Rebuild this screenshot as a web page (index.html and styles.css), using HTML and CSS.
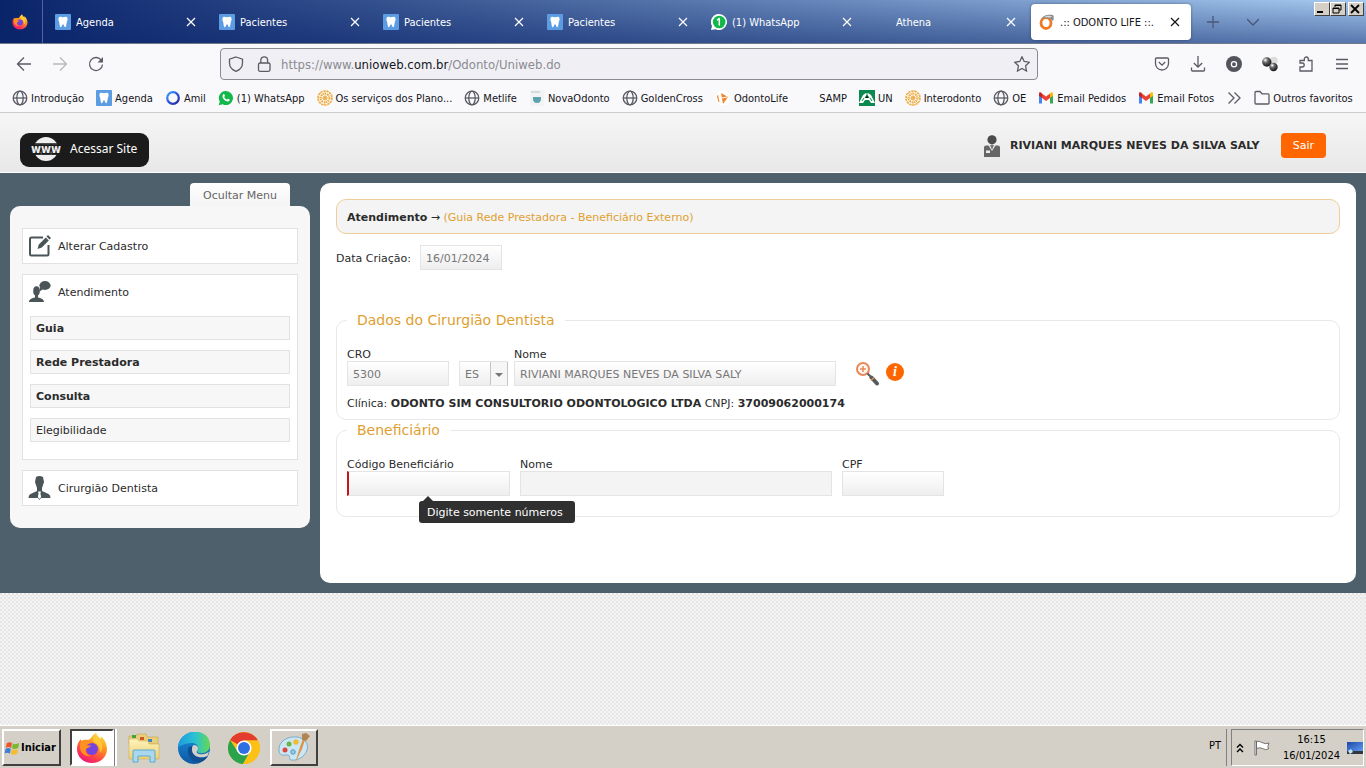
FILE: index.html
```html
<!DOCTYPE html>
<html lang="pt-BR">
<head>
<meta charset="utf-8">
<title>.:: ODONTO LIFE ::.</title>
<link rel="stylesheet" href="styles.css">
</head>
<body>
<svg class="sprite" aria-hidden="true">
  <defs>
    <linearGradient id="ffg" x1="0.8" y1="0" x2="0.2" y2="1"><stop offset="0" stop-color="#ffe141"/><stop offset=".4" stop-color="#ff8a1e"/><stop offset=".75" stop-color="#ff3750"/><stop offset="1" stop-color="#e01587"/></linearGradient>
    <linearGradient id="edg" x1="0" y1="0" x2="1" y2="0"><stop offset="0" stop-color="#1c9be0"/><stop offset=".55" stop-color="#2bc2d0"/><stop offset="1" stop-color="#66d94e"/></linearGradient>
    <linearGradient id="edb" x1="0" y1="0" x2="0" y2="1"><stop offset="0" stop-color="#1b8fdc"/><stop offset="1" stop-color="#0c59a4"/></linearGradient>
    <linearGradient id="fold" x1="0" y1="0" x2="0" y2="1"><stop offset="0" stop-color="#fff3bd"/><stop offset="1" stop-color="#edd06f"/></linearGradient>
    <radialGradient id="ball" cx=".35" cy=".3" r=".8"><stop offset="0" stop-color="#fff"/><stop offset=".35" stop-color="#666"/><stop offset="1" stop-color="#050505"/></radialGradient>
    <linearGradient id="scr" x1="0" y1="0" x2="1" y2="1"><stop offset="0" stop-color="#1c48a8"/><stop offset="1" stop-color="#5f9cf0"/></linearGradient>
    <linearGradient id="aml" x1="0" y1="0" x2="1" y2="1"><stop offset="0" stop-color="#39a9ff"/><stop offset=".5" stop-color="#2c54e0"/><stop offset="1" stop-color="#2a2494"/></linearGradient>
  </defs>
  <symbol id="tooth" viewBox="0 0 16 16"><rect width="16" height="16" rx="1" fill="#5b9ce2"/><path fill="#fff" d="M4 3.200c1.400-.8 2.600 0 4 0s2.600-.8 4 0c1 1 .7 3-.1 4.600-.5 1.600-.4 5.300-1.600 5.500-1.200.2-1.200-3-2.300-3s-1.100 3.200-2.300 3c-1.200-.2-1.100-3.900-1.600-5.500C3.300 6.200 3 4.200 4 3.200z"/></symbol>
  <symbol id="x" viewBox="0 0 10 10"><path d="M1 1l8 8M9 1L1 9" stroke="currentColor" stroke-width="1.200" fill="none"/></symbol>
  <symbol id="firefox" viewBox="0 0 32 32"><path fill="url(#ffg)" d="M20 1c1 3 3 4 5 6 0-1 0-2-.5-3 4 3 6.500 8 6.500 13 0 8-6.500 14-15 14S1 25 1 17c0-4 1-7 4-10 0 1 0 2 .5 2.500C7 8 9 7.500 12 8c3 0 3-4 8-7z"/><circle cx="16" cy="17" r="6" fill="#7543e0"/><path fill="#ff9220" d="M5 9c4-2 7-1 9 2-1 1-3 1-4 2 2 1 4 0 6 1-2 0-4 2-6 3-1 3 1 6 5 7-6 1-11-3-11-9 0-2 0-4 1-6z"/><path fill="#ffd43b" d="M20 1c1 4 5 6 6 11 1 4 0 7-2 9 0-5-1-8-5-10-3-2-3-6 1-10z" opacity=".75"/></symbol>
  <symbol id="globe" viewBox="0 0 16 16"><g fill="none" stroke="#5b5b66" stroke-width="1.300"><circle cx="8" cy="8" r="6.800"/><ellipse cx="8" cy="8" rx="3.200" ry="6.800"/><path d="M1.200 8h13.600"/></g></symbol>
  <symbol id="whats" viewBox="0 0 16 16"><path fill="#12b84a" d="M8 1a7 7 0 1 1-3.300 13.200L.7 15.300l1.100-3.800A7 7 0 0 1 8 1z"/><path fill="#fff" d="M5.300 4.200c.8-.5 1.200.2 1.600 1.500.1.500-.5.800-.7 1.200.6 1.300 1.500 2.100 2.800 2.700.5-.2.800-1 1.300-.8 1.300.7 1.700.8 1.400 1.600-.8 1.500-2.600 1.300-4.200.3-2-1.200-4.300-4-2.200-6.500z"/></symbol>
  <symbol id="whatsn" viewBox="0 0 16 16"><path fill="#fff" d="M8 0a8 8 0 1 1-3.500 15.200L0 16l1-4A8 8 0 0 1 8 0z"/><circle cx="8.200" cy="8" r="6.300" fill="#12b84a"/><path fill="none" stroke="#fff" stroke-width="1.500" d="M6 6l2.300-1.300V11.500"/></symbol>
  <symbol id="wheel" viewBox="0 0 16 16"><g fill="none" stroke="#f0b04a"><circle cx="8" cy="8" r="7" stroke-width="1.700" stroke-dasharray="2.400 .7"/><circle cx="8" cy="8" r="4.400" stroke-width="1.600" stroke-dasharray="1.500 .7"/><circle cx="8" cy="8" r="1.500"/><path stroke-width=".8" d="M8 1v14M1 8h14M3 3l10 10M13 3L3 13"/></g></symbol>
  <symbol id="gmail" viewBox="0 0 16 16"><path fill="#4285f4" d="M1 4v9.500h3V7z"/><path fill="#34a853" d="M15 4v9.500h-3V7z"/><path fill="#fbbc04" d="M12 3.500V8l3-2.200V3.500c0-1.500-2-1.800-3 0z"/><path fill="#c5221f" d="M4 3.500V8L1 5.800V3.500c0-1.500 2-1.800 3 0z"/><path fill="#ea4335" d="M4 3.500l4 3 4-3V8l-4 3-4-3z"/></symbol>
</svg>

<header class="browser">
  <div class="tabs">
    <div class="pinned"><svg class="i16"><use href="#firefox"/></svg></div>
    <div class="tab"><svg class="i16"><use href="#tooth"/></svg><span>Agenda</span><button aria-label="Fechar aba"><svg><use href="#x"/></svg></button></div>
    <div class="tab"><svg class="i16"><use href="#tooth"/></svg><span>Pacientes</span><button aria-label="Fechar aba"><svg><use href="#x"/></svg></button></div>
    <div class="tab"><svg class="i16"><use href="#tooth"/></svg><span>Pacientes</span><button aria-label="Fechar aba"><svg><use href="#x"/></svg></button></div>
    <div class="tab"><svg class="i16"><use href="#tooth"/></svg><span>Pacientes</span><button aria-label="Fechar aba"><svg><use href="#x"/></svg></button></div>
    <div class="tab"><svg class="i16"><use href="#whatsn"/></svg><span>(1) WhatsApp</span><button aria-label="Fechar aba"><svg><use href="#x"/></svg></button></div>
    <div class="tab"><svg class="i16"></svg><span>Athena</span><button aria-label="Fechar aba"><svg><use href="#x"/></svg></button></div>
    <div class="tab active"><svg class="i16" viewBox="0 0 16 16"><ellipse cx="7" cy="9" rx="5" ry="5.500" fill="none" stroke="#ee7a25" stroke-width="2.800"/><path d="M3 5C4 1 9 0 14 1c1 2 1 4 0 6-3-3-7-4-11-2z" fill="#8d8d8d"/><path d="M5 3.500c2-2 5-2 8-1-2 2-5 0-8 1z" fill="#ddd"/></svg><span>.:: ODONTO LIFE ::.</span><button aria-label="Fechar aba"><svg><use href="#x"/></svg></button></div>
    <div class="tabtools">
      <button aria-label="Nova aba"><svg viewBox="0 0 12 12"><path d="M6 0v12M0 6h12"/></svg></button>
      <button aria-label="Listar abas"><svg viewBox="0 0 12 12"><path d="M0 3l6 6 6-6"/></svg></button>
    </div>
    <div class="winbtns">
      <button aria-label="Minimizar"><svg viewBox="0 0 12 10"><path d="M2 8h6" stroke-width="2"/></svg></button>
      <button aria-label="Restaurar"><svg viewBox="0 0 12 10"><path d="M4 3V1h6v5H8M4 1.500h6M2 4h6v5H2zM2 4.500h6"/></svg></button>
      <button class="close" aria-label="Fechar"><svg viewBox="0 0 12 10"><path d="M2 1l8 8M10 1L2 9" stroke-width="1.800"/></svg></button>
    </div>
  </div>

  <div class="navbar">
    <div class="navleft">
      <button aria-label="Voltar"><svg viewBox="0 0 16 16"><path d="M15 8H1.500M8 1.500L1.500 8 8 14.500"/></svg></button>
      <button class="dim" aria-label="Avançar"><svg viewBox="0 0 16 16"><path d="M1 8h13.500M8 1.500L14.500 8 8 14.500"/></svg></button>
      <button aria-label="Recarregar"><svg viewBox="0 0 16 16"><path d="M13.500 4.500A6.500 6.500 0 1 0 14.500 8.500"/><path d="M15 1v5.500H9.500z" fill="#5b5b66" stroke="none"/></svg></button>
    </div>
    <div class="urlbar">
      <svg class="i16" viewBox="0 0 16 16"><path d="M8 1l6.500 2.200V7c0 4-3 7-6.500 8.300C4.500 14 1.500 11 1.500 7V3.200z"/></svg>
      <svg class="i16" viewBox="0 0 16 16"><rect x="2.500" y="7" width="11.500" height="8.300" rx="1.500"/><path d="M4.800 7V4.200a3.400 3.400 0 0 1 6.800 0V7"/></svg>
      <p class="url">https://www.<b>unioweb.com.br</b>/Odonto/Uniweb.do</p>
      <svg class="i16" viewBox="0 0 16 16"><path d="M8 .8l2.200 4.700 5.100.7-3.700 3.600.9 5.200L8 12.500 3.500 15l.9-5.200L.7 6.200l5.100-.7z"/></svg>
    </div>
    <div class="navright">
      <button aria-label="Pocket"><svg viewBox="0 0 16 16"><path d="M2.500 2h11q1 0 1 1v4.500a6.500 6.500 0 0 1-13 0V3q0-1 1-1zM4.800 6L8 9.200 11.200 6"/></svg></button>
      <button aria-label="Downloads"><svg viewBox="0 0 16 16"><path d="M8 0v11M3.800 7L8 11l4.200-4M1.500 11.500V14q0 1 1 1h11q1 0 1-1v-2.500"/></svg></button>
      <button aria-label="Conta"><svg viewBox="0 0 16 16"><circle cx="8" cy="8" r="8" fill="#54545f" stroke="none"/><circle cx="8" cy="8.300" r="2.600" stroke="#fff"/></svg></button>
      <button aria-label="Extensão"><svg viewBox="0 0 16 16"><circle cx="12" cy="4.500" r="3.800" fill="#ddd" stroke="none"/><circle cx="4.800" cy="6" r="4.700" fill="url(#ball)" stroke="none"/><circle cx="11.500" cy="11" r="4.200" fill="url(#ball)" stroke="none"/></svg></button>
      <button aria-label="Extensões"><svg viewBox="0 0 16 16"><path d="M2 15V11h2.200a2 2 0 0 0 0-4H2V4.500h4.300V3a2 2 0 0 1 4 0v1.500H14V15z"/></svg></button>
      <button aria-label="Menu"><svg viewBox="0 0 16 16"><path d="M2 3.500h12M2 8h12M2 12.500h12"/></svg></button>
    </div>
  </div>

  <nav class="bookmarks">
    <a href="#"><svg class="i16"><use href="#globe"/></svg><span>Introdução</span></a>
    <a href="#"><svg class="i16"><use href="#tooth"/></svg><span>Agenda</span></a>
    <a href="#"><svg class="i16" viewBox="0 0 16 16"><circle cx="8" cy="8" r="5.800" fill="none" stroke="url(#aml)" stroke-width="2.200"/></svg><span>Amil</span></a>
    <a href="#"><svg class="i16"><use href="#whats"/></svg><span>(1) WhatsApp</span></a>
    <a href="#"><svg class="i16"><use href="#wheel"/></svg><span>Os serviços dos Plano...</span></a>
    <a href="#"><svg class="i16"><use href="#globe"/></svg><span>Metlife</span></a>
    <a href="#"><svg class="i16" viewBox="0 0 16 16"><rect x="1" width="14" height="16" fill="#f1f3f4"/><path d="M2 2h9" stroke="#c9d5d8" stroke-width="1.500"/><path d="M4 7h8q.5 6-4 6T4 7z" fill="#5da3ad"/></svg><span>NovaOdonto</span></a>
    <a href="#"><svg class="i16"><use href="#globe"/></svg><span>GoldenCross</span></a>
    <a href="#"><svg class="i16" viewBox="0 0 16 16"><circle cx="8" cy="8" r="7.500" fill="#fff"/><path d="M3 5l1.500 7h-1L1.800 6zM6 3l7 4-5 7z" fill="#f0862b"/><path d="M6.500 8l6-1" stroke="#fff"/></svg><span>OdontoLife</span></a>
    <a href="#"><svg class="i16"></svg><span>SAMP</span></a>
    <a href="#"><svg class="i16" viewBox="0 0 16 16"><path fill="#0a8a50" d="M0 0h16v16H0z"/><path d="M0 13l4-8 3-2h2l3 2 4 8h-4l-2-3H6l-2 3z" fill="#fff"/><path d="M8 2v3M6 8l2-3 2 3M3 11l2-3M13 11l-2-3" stroke="#0a8a50"/></svg><span>UN</span></a>
    <a href="#"><svg class="i16"><use href="#wheel"/></svg><span>Interodonto</span></a>
    <a href="#"><svg class="i16"><use href="#globe"/></svg><span>OE</span></a>
    <a href="#"><svg class="i16"><use href="#gmail"/></svg><span>Email Pedidos</span></a>
    <a href="#"><svg class="i16"><use href="#gmail"/></svg><span>Email Fotos</span></a>
    <button class="more" aria-label="Mais favoritos"><svg class="i16" viewBox="0 0 16 16"><path d="M2.500 2.500L8 8l-5.500 5.500M8.500 2.500L14 8l-5.500 5.500"/></svg></button>
    <a href="#"><svg class="i16 line" viewBox="0 0 16 16"><path d="M1 13V2.500q0-1 1-1h4L8 3.800h6q1 0 1 1V13q0 1-1 1H2q-1 0-1-1z"/></svg><span>Outros favoritos</span></a>
  </nav>
</header>

<div class="site">
  <header class="sitebar">
    <a class="acessar" href="#"><svg viewBox="0 0 28 24"><circle cx="14" cy="12" r="12" fill="#eee"/><path d="M2 7h24M2 17h24" stroke="#1b1b1b" stroke-width="1.300"/><text x="14" y="16" text-anchor="middle" class="www">www</text></svg>Acessar Site</a>
    <div class="user">
      <svg viewBox="0 0 18 22"><circle cx="9" cy="4.800" r="4.600" fill="#4b4b4b"/><path d="M1 22V12.500q0-2 2-2h2.500L9 16l3.500-5.500H15q2 0 2 2V22z" fill="#666"/><path d="M7 10h4l-2 5z" fill="#777"/><path d="M3 15.500h4V18H3z" fill="#eee"/></svg>
      <strong>RIVIANI MARQUES NEVES DA SILVA SALY</strong>
      <button class="sair">Sair</button>
    </div>
  </header>

  <div class="stage">
    <aside class="side">
      <button class="hide">Ocultar Menu</button>
      <nav class="menu">
        <section><a class="head" href="#"><svg viewBox="0 0 24 24"><path d="M15 3.500H3.500Q2 3.500 2 5v15q0 1.500 1.500 1.500h15.500q1.500 0 1.500-1.500V11" fill="none" stroke="#4a5558" stroke-width="2"/><path d="M9.500 15l1.300-4.500 7-7 3 3-7 7zM18.500 2.500L20 1l3 3-1.500 1.500z" fill="#4a5558"/></svg><span>Alterar Cadastro</span></a></section>
        <section class="open">
          <a class="head" href="#"><svg viewBox="0 0 24 24"><g fill="#4a5558"><ellipse cx="17" cy="5.500" rx="5.600" ry="4.400"/><path d="M12 7l-1 5 4-3z"/><ellipse cx="8.500" cy="11" rx="3.300" ry="4.800"/><path d="M7 14h3v3.500c3 .7 6 1.500 6 4.500H1c0-3 3-3.800 6-4.500z"/></g></svg><span>Atendimento</span></a>
          <a class="sub" href="#"><b>Guia</b></a>
          <a class="sub" href="#"><b>Rede Prestadora</b></a>
          <a class="sub" href="#"><b>Consulta</b></a>
          <a class="sub" href="#">Elegibilidade</a>
        </section>
        <section><a class="head" href="#"><svg viewBox="0 0 24 24"><g fill="#4a5558"><path d="M8 1q3.500-2 7 0l1 5-2 6v3l6.500 3q2 1 2 4H.5q0-3 2-4L9 15v-3L7 6z"/><path d="M10 22h3l-1.500 2z"/></g><path d="M10 15.500h3l-.6 2 .8 3.500-1.700 2-1.700-2 .8-3.500z" fill="#fff"/></svg><span>Cirurgião Dentista</span></a></section>
      </nav>
    </aside>

    <main class="main">
      <h1 class="title"><b>Atendimento</b> → <span>(Guia Rede Prestadora - Beneficiário Externo)</span></h1>
      <div class="daterow"><label for="data">Data Criação:</label><input id="data" value="16/01/2024" disabled></div>

      <fieldset>
        <legend>Dados do Cirurgião Dentista</legend>
        <div class="fields dentist">
          <div class="field small"><label for="cro">CRO</label><input id="cro" value="5300" disabled></div>
          <div class="ufnome">
            <select aria-label="UF" disabled><option>ES</option></select>
            <div class="field wide"><label for="nome">Nome</label><input id="nome" value="RIVIANI MARQUES NEVES DA SILVA SALY" disabled></div>
          </div>
          <div class="actions">
            <button aria-label="Pesquisar"><svg viewBox="0 0 24 24"><circle cx="7" cy="7" r="6" fill="#fff6ef" stroke="#e58a5b" stroke-width="2"/><path d="M7 4v6M4 7h6" stroke="#e58a5b" stroke-width="1.500"/><path d="M11.500 11.500l3.500 3.500" stroke="#555" stroke-width="2"/><path d="M15.500 15.500l5.500 6" stroke="#555a5e" stroke-width="4" stroke-linecap="round"/><path d="M18 15.500l-3 3" stroke="#e58a3b" stroke-width="1.500"/></svg></button>
            <button aria-label="Informações" class="info"><i>i</i></button>
          </div>
        </div>
        <p class="clinic">Clínica: <b>ODONTO SIM CONSULTORIO ODONTOLOGICO LTDA</b> CNPJ: <b>37009062000174</b></p>
      </fieldset>

      <fieldset class="benef">
        <legend>Beneficiário</legend>
        <div class="fields">
          <div class="field code"><label for="cod">Código Beneficiário</label><input id="cod" aria-describedby="tip"><span class="tip" id="tip" role="tooltip">Digite somente números</span></div>
          <div class="field wide"><label for="bnome">Nome</label><input id="bnome" class="locked" readonly></div>
          <div class="field small"><label for="cpf">CPF</label><input id="cpf"></div>
        </div>
      </fieldset>
    </main>
  </div>
</div>

<footer class="taskbar">
  <button class="start raised"><svg viewBox="0 0 18 16"><path d="M3 3q3-2.500 6-.5L8 8Q5 6 2 8z" fill="#e8562a"/><path d="M10 3q3 1.500 7-.5L16 8q-4 2-7 .2z" fill="#78b82c"/><path d="M1.700 9q3-2 6-.2l-1 5.500q-3-2-6 0z" fill="#3c7fd4"/><path d="M8.800 9.300q3 1.700 7 0l-1 5.200q-4 2-7 .2z" fill="#f5bd2c"/></svg>Iniciar</button>
  <div class="apps">
    <button class="app sunken" aria-label="Firefox"><svg><use href="#firefox"/></svg></button>
    <button class="app" aria-label="Explorador"><svg viewBox="0 0 32 32"><path d="M1 4h7l1-2h9l1 3h11v7H1z" fill="#e9cf7a" stroke="#c5a54c" stroke-width=".6"/><path d="M4 3h4v3H4z" fill="#42a23c"/><path d="M12 5h4v3h-4z" fill="#d0552b"/><path d="M20 7h4v3h-4z" fill="#3a84c4"/><path d="M1 7h9l1 2h9l1 3h10v15H1z" fill="url(#fold)" stroke="#cfb05a" stroke-width=".6"/><path d="M5 30V19q0-1 1-1h20q1 0 1 1v11h-5v-6H10v6z" fill="#a9d8ee" stroke="#5ba8cf"/></svg></button>
    <button class="app" aria-label="Edge"><svg viewBox="0 0 32 32"><circle cx="16" cy="16" r="16" fill="url(#edb)"/><path d="M0 15C2-5 32-5 32 13c0 6-5 9-11 8-2-.5-2-1.500-1-3 1-3-1-7-6-7-7 0-12 3-14 4z" fill="url(#edg)"/><path d="M10 17c-1 8 5 14 12 13 3-.5 6-3 8-6-7 4-18 1-15-10-3 0-5 1-5 3z" fill="#124d8f"/><path d="M16 13c4 0 5 4 3 6-1 1 0 2.500 2 3 4 1 8-.5 10-2.500L29.500 24c-6 3-16 1-15.500-7 0-2 .5-3.500 2-4z" fill="#d4d0c8"/></svg></button>
    <button class="app" aria-label="Chrome"><svg viewBox="0 0 32 32"><circle cx="16" cy="16" r="16" fill="#fbc116"/><path d="M16 16L2.100 8A16 16 0 0 1 29.900 8.500H16z" fill="#e33b2e"/><path d="M2.100 8A16 16 0 0 0 15 32l7-12.500-12.500 0z" fill="#2ba24c"/><path d="M29.900 8.500H16l6.500 11L15 32a16 16 0 0 0 14.900-23.500z" fill="#fbc116"/><circle cx="16" cy="16" r="7.600" fill="#fff"/><circle cx="16" cy="16" r="6" fill="#2f6fe4"/></svg></button>
    <button class="app raised" aria-label="Paint"><svg viewBox="0 0 32 32"><path d="M1 19C0 9 10 4 19 5c8 1 12 7 10 13-2 7-10 11-16 10-3-1 0-4-3-5-3-.5-8 2-9-4z" fill="#cde6f4" stroke="#79acc9"/><circle cx="7" cy="18" r="2.500" fill="#d9483b"/><circle cx="11" cy="12" r="2.500" fill="#69b345"/><circle cx="18" cy="10" r="2.700" fill="#f0bd32"/><circle cx="15" cy="20" r="2.300" fill="#8ecbe8" stroke="#5d9dbf"/><path d="M17 31l5-16 3-8 2 1-3 9z" fill="#dd9446"/><path d="M24 2l4-1 4 3-4 5-4-1z" fill="#b38452"/></svg></button>
  </div>
  <span class="lang">PT</span>
  <div class="tray">
    <svg class="chev" viewBox="0 0 8 10"><path d="M1 4.500l3-3 3 3M1 9l3-3 3 3"/></svg>
    <svg class="flag" viewBox="0 0 16 16"><path d="M1 1h1.500v14H1zM2.500 1.500Q5 .5 8 2.500q3 2 7 .5-2 4-.5 6-3 1.500-6-.5-3-1.500-6 0z" fill="#fff" stroke="#666" stroke-width=".9"/></svg>
    <div class="clock"><span>16:15</span><span>16/01/2024</span></div>
    <svg class="desk" viewBox="0 0 16 14"><path d="M0 1h16v12H0z" fill="#33383f"/><path d="M0 1h16v9H0z" fill="url(#scr)"/><path d="M1 10l3-2 2 3-3 2z" fill="#bfe4f5"/></svg>
  </div>
</footer>
</body>
</html>
```
FILE: styles.css
```css
* { box-sizing: border-box; }
body {
  margin: 0;
  min-height: 100vh;
  display: flex;
  flex-direction: column;
  font: 11px/14px "DejaVu Sans", Verdana, sans-serif;
  color: #2b2b2b;
}
button, input, select { font: inherit; color: inherit; margin: 0; }
button { padding: 0; border: 0; background: none; }
a { color: inherit; text-decoration: none; }
p, h1 { margin: 0; font: inherit; }
svg { display: block; flex: none; }
.sprite { position: absolute; width: 0; height: 0; }
.i16 { width: 16px; height: 16px; }

/* Browser chrome */
.browser {
  background: #f9f9fb;
  border-bottom: 1px solid #ccc;
  font: 11px/16px "DejaVu Sans Condensed", Tahoma, sans-serif;
  color: #15141a;
}
.tabs {
  display: flex;
  height: 44px;
  border-bottom: 1px solid #73788a;
  background:
    linear-gradient(to bottom, transparent, rgba(10, 36, 106, .5)),
    linear-gradient(to right, #0a246a, #a6caf0);
  color: #fff;
}
.pinned { width: 43px; padding: 14px 12px; border-right: 1px solid #4f66a0; }
.tab { display: flex; align-items: center; gap: 5px; flex: 0 1 164px; padding: 0 4px 0 12px; }
.tab span { flex: 1; padding-top: 2px; white-space: nowrap; overflow: hidden; }
.tab button { width: 24px; height: 24px; display: grid; place-items: center; }
.tab button svg { width: 10px; height: 10px; }
.tab.active {
  flex-basis: 160px;
  margin: 4px 0 3px 4px;
  padding: 0 4px 0 8px;
  border-radius: 4px;
  background: #fff;
  color: #15141a;
  box-shadow: 0 0 3px rgba(0, 0, 0, .4);
}
.tabtools { display: flex; gap: 28px; padding-left: 16px; align-items: center; }
.tabtools svg { width: 12px; height: 12px; fill: none; stroke: #4a5876; stroke-width: 1.300; }
.winbtns { display: flex; margin-left: auto; padding: 2px 2px 0 0; }
.winbtns button {
  width: 16px;
  height: 14px;
  background: #d4d0c8;
  border: 1px solid;
  border-color: #fff #404040 #404040 #fff;
}
.winbtns .close { margin-left: 2px; }
.winbtns svg { width: 12px; height: 10px; fill: none; stroke: #000; }

.navbar { display: flex; align-items: center; height: 40px; padding: 0 16px; }
.navbar svg { width: 16px; height: 16px; fill: none; stroke: #5b5b66; stroke-width: 1.300; }
.navbar .dim { opacity: .4; }
.navleft, .navright { display: flex; gap: 20px; }
.navleft { width: 204px; }
.navright { width: 312px; justify-content: flex-end; }
.urlbar {
  flex: 1;
  display: flex;
  align-items: center;
  gap: 12px;
  height: 32px;
  padding: 0 7px;
  border: 1px solid #8a8a92;
  border-radius: 4px;
  background: #f0f0f4;
}
.url { flex: 1; margin-left: -3px; padding-top: 2px; font-size: 13px; color: #8a8a92; }
.url b { font-weight: 400; color: #15141a; }

.bookmarks { display: flex; justify-content: space-between; align-items: center; height: 28px; padding: 0 13px 0 12px; white-space: nowrap; }
.bookmarks a { display: flex; align-items: center; gap: 3px; }
.bookmarks span { padding-top: 2px; }
.more svg, .bookmarks .line { fill: none; stroke: #5b5b66; stroke-width: 1.300; }

/* Site */
.site {
  flex: 1;
  background:
    radial-gradient(circle at 1px 1px, #e4e4e4 1px, transparent 1px) 0 0 / 4px 4px,
    radial-gradient(circle at 3px 3px, #e9e9e9 1px, transparent 1px) 0 0 / 4px 4px,
    #f4f4f4;
}
.sitebar {
  display: flex;
  justify-content: space-between;
  align-items: flex-start;
  height: 60px;
  padding: 20px 40px 0 20px;
  border-bottom: 1px solid #fff;
  background: linear-gradient(#f6f6f6, #e8e8e8);
}
.acessar {
  display: flex;
  align-items: center;
  gap: 10px;
  height: 34px;
  padding: 0 12px 2px;
  border-radius: 9px;
  background: #1b1b1b;
  color: #fff;
  font: 12px/18px "Noto Sans", sans-serif;
}
.acessar svg { width: 28px; height: 24px; overflow: visible; }
.www {
  font: bold 12px "DejaVu Sans Condensed", sans-serif;
  fill: #eee;
  stroke: #1b1b1b;
  stroke-width: 3px;
  paint-order: stroke;
}
.user { display: flex; align-items: center; gap: 9px; }
.user svg { width: 18px; height: 22px; }
.user strong { min-width: 262px; }
.sair { width: 45px; height: 25px; padding-top: 1px; border-radius: 4px; background: #f60; color: #fff; }

.stage { display: flex; align-items: flex-start; gap: 10px; padding: 10px; background: #4e606c; }
.side { width: 300px; flex: none; display: flex; flex-direction: column; align-items: flex-end; }
.hide {
  width: 100px;
  height: 23px;
  margin-right: 20px;
  padding-top: 2px;
  border-radius: 4px 4px 0 0;
  background: linear-gradient(#fff, #f4f4f4);
  color: #666;
}
.menu {
  width: 100%;
  display: flex;
  flex-direction: column;
  gap: 10px;
  padding: 22px 12px;
  border-radius: 10px;
  background: #f7f7f7;
}
.menu section { padding: 0 7px; border: 1px solid #e2e2e2; background: #fff; }
.menu .open { display: flex; flex-direction: column; gap: 10px; padding-bottom: 17px; }
.head { display: flex; align-items: center; gap: 6px; height: 34px; margin-left: -2px; }
.head span { padding-top: 2px; }
.open .head { margin-bottom: -3px; }
.head svg { width: 24px; height: 24px; }
.sub { display: block; height: 24px; padding: 5px 5px 3px; border: 1px solid #e2e2e2; background: #f7f7f7; }

.main { flex: 1; min-height: 400px; padding: 16px; border-radius: 10px; background: #fff; }
.title {
  padding: 11px 10px 8px;
  line-height: 14px;
  border: 1px solid #efcd98;
  border-radius: 10px;
  background: #f4f4f4;
}
.title span, legend { color: #e0a030; }
.daterow { display: flex; align-items: center; gap: 5px; margin: 11px 0 40px; }
.daterow label { min-width: 79px; padding-top: 2px; }
.daterow input { width: 82px; }
input, select {
  display: block;
  width: 100%;
  height: 25px;
  padding: 2px 5px 0;
  border: 1px solid #e4e4e4;
  border-radius: 0;
  background: linear-gradient(#fff, #eee);
  outline: 0;
}
input:disabled, select:disabled { color: #777; opacity: 1; }
input.locked { background: #f4f4f4; }

fieldset { margin: 0; padding: 19px 10px 8px; border: 1px solid #e8e8e8; border-radius: 10px; }
fieldset.benef { padding-bottom: 20px; }
legend { padding: 0 10px; font-size: 14px; line-height: 20px; }
.fields { display: flex; align-items: flex-end; gap: 10px; }
.field { position: relative; }
.field label { display: block; line-height: 12px; }
.small { width: 102px; }
.ufnome { display: flex; align-items: flex-end; gap: 6px; }
.ufnome .wide { width: 322px; }
.wide { width: 312px; }
.code { width: 163px; }
.code input { border-left: 2px solid #c8141c; }
select {
  width: 49px;
  appearance: none;
  background:
    url("data:image/svg+xml,%3Csvg xmlns='http://www.w3.org/2000/svg' width='18' height='25'%3E%3Cpath d='M.5.5h17v24H.5z' fill='%23f6f6f6' stroke='%23c4c4c4'/%3E%3Cpath d='M5 12h8l-4 4z' fill='%23777'/%3E%3C/svg%3E") right center / 18px 25px no-repeat border-box,
    linear-gradient(#fff, #eee);
  border-right-color: transparent;
}
.actions { display: flex; align-items: center; gap: 6px; margin-left: 10px; }
.actions svg { width: 24px; height: 24px; }
.info {
  width: 18px;
  height: 18px;
  margin-bottom: 4px;
  border-radius: 50%;
  background: #f60;
  color: #fff;
  font: bold 14px/18px "Liberation Serif", serif;
}
.clinic { margin-top: 11px; }
.tip {
  position: absolute;
  left: 72px;
  top: 42px;
  min-width: 156px;
  padding: 5px 8px 3px;
  border-radius: 3px;
  background: #303030;
  color: #fff;
  white-space: nowrap;
}
.tip::before {
  content: "";
  position: absolute;
  left: 4px;
  top: -5px;
  border: 5px solid transparent;
  border-top: 0;
  border-bottom-color: #303030;
}

/* Taskbar */
.taskbar {
  display: flex;
  align-items: stretch;
  height: 43px;
  padding: 3px 2px 2px;
  border-top: 1px solid #fff;
  background: #d4d0c8;
  color: #000;
  font: 11px/16px "DejaVu Sans Condensed", Tahoma, sans-serif;
}
.raised { border: 2px solid; border-color: #fff #404040 #404040 #fff; }
.start { display: flex; align-items: center; gap: 1px; width: 59px; font-weight: 700; }
.start svg { width: 16px; height: 16px; }
.apps { display: flex; gap: 2px; margin-left: 9px; flex: 1; }
.app { width: 48px; display: grid; place-items: center; }
.app svg { width: 32px; height: 32px; }
.sunken {
  width: 44px;
  margin-right: 4px;
  border: 2px solid;
  border-color: #404040 #fff #fff #404040;
  background: #fff;
  box-shadow: 1px 0 #808080, 3px 0 #fff;
}
.lang { align-self: center; padding: 0 6px 4px 0; }
.tray {
  display: flex;
  align-items: center;
  gap: 10px;
  margin-left: 4px;
  padding: 0 0 0 4px;
  border: 1px solid;
  border-color: #808080 #fff #fff #808080;
}
.lang + .tray { box-shadow: -4px 0 #d4d0c8, -5px 0 #808080; }
.chev { width: 8px; height: 10px; fill: none; stroke: #000; stroke-width: 1.400; }
.flag, .desk { width: 16px; height: 16px; }
.clock { display: flex; flex-direction: column; align-items: center; margin-left: 3px; }
.clock + svg { margin-left: -3px; }
```
